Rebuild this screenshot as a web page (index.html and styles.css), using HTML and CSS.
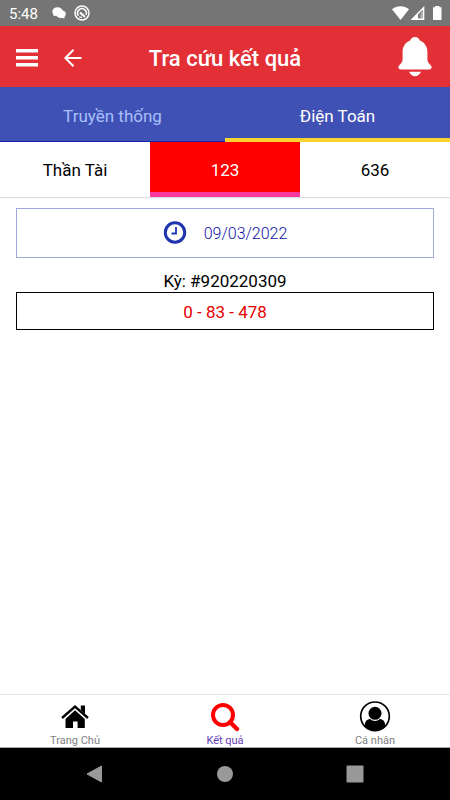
FILE: index.html
```
<!DOCTYPE html>
<html lang="vi">
<head>
    <meta charset="UTF-8">
    <meta name="viewport" content="width=device-width, initial-scale=1.0">
    <title>Tra cứu kết quả</title>
    <link rel="stylesheet" href="styles.css">
</head>
<body>
    <div class="status-bar">
        <span class="time">5:48</span>
        <svg width="14" height="14" viewBox="0 0 14 14" fill="#fff">
            <ellipse cx="5.5" cy="5.5" rx="5.2" ry="4.3"/>
            <ellipse cx="8.8" cy="8" rx="5" ry="4"/>
            <path d="M1 7L1.6 10L5 9.5ZM9 11L12.4 12.8L12.5 10Z"/>
        </svg>
        <svg class="ring-icon" width="16" height="16" viewBox="0 0 16 16" fill="none" stroke="#fff">
            <circle cx="8" cy="8" r="7" stroke-width="1.5"/>
            <path d="M4.5 10.8A4.4 4.4 0 1 1 12 9.8" stroke-width="1.6"/>
            <path d="M6 7.5L11 12" stroke-width="2.2"/>
            <path d="M5 12L8 12.4" stroke-width="1.2"/>
        </svg>
        <svg class="system-icons" width="50" height="16" viewBox="0 0 50 16">
            <path d="M0 4.2C5 .2 12 .2 17 4.2L8.5 15Z" fill="#fff"/>
            <path d="M18.5 15L32.3 1V15Z" fill="#fff"/>
            <path d="M26 9.5L30.8 4.7V13.3H26Z" fill="#757575"/>
            <path d="M28.4 13.3V8.2L30.8 6V13.3Z" fill="#b5b5b5"/>
            <path d="M41 2.2H43V1H47.5V2.2H49.5V15H41Z" fill="#fff"/>
        </svg>
    </div>

    <header class="header">
        <div class="header-left">
            <button class="icon-button" aria-label="Menu">
                <svg width="22" height="18" viewBox="0 0 22 18" fill="#fff">
                    <path d="M0 0H22V3.5H0ZM0 7H22V10.5H0ZM0 14H22V17.5H0Z"/>
                </svg>
            </button>
            <button class="icon-button" aria-label="Quay lại">
                <svg width="18" height="18" viewBox="0 0 18 18" fill="none" stroke="#fff" stroke-width="2">
                    <path d="M17.5 9H1.5M9.5 .8L1.3 9L9.5 17.2"/>
                </svg>
            </button>
        </div>
        <h1>Tra cứu kết quả</h1>
        <button class="icon-button bell" aria-label="Thông báo">
            <svg width="34" height="40" viewBox="0 0 34 40" fill="#fff">
                <path d="M17 0C19.5 0 21 1.5 21.8 3.4C26.6 5.2 29.4 9.5 29.4 15V22C29.4 25 30.8 26.3 32.5 28C34.5 30 33.8 32.4 31 32.4H3C.2 32.4 -.5 30 1.5 28C3.2 26.3 4.6 25 4.6 22V15C4.6 9.5 7.4 5.2 12.2 3.4C13 1.5 14.5 0 17 0Z"/>
                <path d="M11 34.8H23C21.5 37.8 19.5 39.2 17 39.2S12.5 37.8 11 34.8Z"/>
            </svg>
        </button>
    </header>

    <nav class="tabs">
        <a href="#">Truyền thống</a>
        <a href="#" class="active">Điện Toán</a>
    </nav>
    <nav class="sub-tabs">
        <a href="#">Thần Tài</a>
        <a href="#" class="active">123</a>
        <a href="#">636</a>
    </nav>

    <main class="content">
        <button class="date-button">
            <svg width="24" height="24" viewBox="0 0 24 24" fill="none" stroke="#1f35b0">
                <circle cx="12" cy="11.5" r="9.7" stroke-width="3"/>
                <path d="M13 6V12.5H8.5" stroke-width="1.8"/>
            </svg>
            <span>09/03/2022</span>
        </button>
        <p class="draw-id">Kỳ: #920220309</p>
        <div class="result">0 - 83 - 478</div>
    </main>

    <nav class="bottom-nav">
        <a href="#">
            <svg width="32" height="32" viewBox="0 0 32 32">
                <path d="M21.8 5.5H26V14L21.8 10Z"/>
                <path d="M3 18L16 6.5L29 18" fill="none" stroke="#000" stroke-width="2.4"/>
                <path d="M16 10.3L25.8 19V28H18.6V21.5H14V28H6.5V19Z"/>
            </svg>
            <span>Trang Chủ</span>
        </a>
        <a href="#" class="active">
            <svg width="32" height="32" viewBox="0 0 32 32" fill="none" stroke="#f00">
                <circle cx="14" cy="15" r="10" stroke-width="4"/>
                <path d="M21 22L28 29" stroke-width="4.4" stroke-linecap="round"/>
            </svg>
            <span>Kết quả</span>
        </a>
        <a href="#">
            <svg width="32" height="32" viewBox="0 0 32 32">
                <circle cx="16" cy="16.3" r="14.3" fill="none" stroke="#000" stroke-width="1.7"/>
                <circle cx="16" cy="13.3" r="6.5"/>
                <path d="M5.8 26C5.8 21.5 7.5 19.5 11 19C14 21.5 18 21.5 21 19C24.5 19.5 26.2 21.5 26.2 26C20.5 31.8 11.5 31.8 5.8 26Z"/>
            </svg>
            <span>Cá nhân</span>
        </a>
    </nav>

    <div class="system-nav">
        <button class="icon-button" aria-label="Back">
            <svg width="18" height="18" viewBox="0 0 18 18"><path d="M1 9L15.5 1V17Z" fill="#999" stroke="#999" stroke-linejoin="round"/></svg>
        </button>
        <button class="icon-button" aria-label="Home">
            <svg width="18" height="18" viewBox="0 0 18 18"><circle cx="9" cy="9" r="8" fill="#999"/></svg>
        </button>
        <button class="icon-button" aria-label="Recent apps">
            <svg width="18" height="18" viewBox="0 0 18 18"><rect x=".5" y=".5" width="17" height="17" rx="1" fill="#999"/></svg>
        </button>
    </div>
</body>
</html>
```

FILE: styles.css
```
* {
    box-sizing: border-box;
}
body {
    margin: 0;
    min-height: 100vh;
    display: flex;
    flex-direction: column;
    background-color: #fff;
    color: #000;
    font-family: Roboto, sans-serif;
    font-size: 17px;
}
a {
    color: inherit;
    text-decoration: none;
}
svg {
    display: block;
    flex-shrink: 0;
}
.icon-button {
    padding: 0;
    border: none;
    background: none;
    cursor: pointer;
}

/* Status bar */
.status-bar {
    display: flex;
    align-items: center;
    gap: 8px;
    height: 26px;
    padding: 0 8px 0 9px;
    background-color: #757575;
    color: #fff;
}
.time {
    margin-right: 6px;
    padding-top: 2px;
    font-size: 15px;
}
.system-icons {
    margin-left: auto;
}

/* Header */
.header {
    display: grid;
    grid-template-columns: 1fr auto 1fr;
    align-items: center;
    height: 61px;
    padding: 0 16px;
    background-color: #e32f36;
    color: #fff;
}
.header-left {
    display: flex;
    align-items: center;
    gap: 26px;
    padding-top: 3px;
}
.header h1 {
    margin: 0;
    padding-top: 3px;
    font-size: 22px;
    font-weight: 500;
}
.bell {
    justify-self: end;
    margin-right: 2px;
}

/* Tabs */
.tabs, .sub-tabs {
    display: flex;
    height: 55px;
}
.tabs a, .sub-tabs a {
    flex: 1;
    display: flex;
    align-items: center;
    justify-content: center;
}
.tabs {
    background-color: #3f51b5;
    color: #a9c0fa;
}
.tabs a {
    padding-top: 3px;
    border-bottom: 1px solid #1424a8;
}
.tabs .active {
    padding-top: 6px;
    border-bottom: 4px solid #fbd32f;
    color: #fff;
}
.sub-tabs {
    box-shadow: 0 1px 1px #ddd;
}
.sub-tabs .active {
    padding-top: 5px;
    border-bottom: 5px solid #f939a0;
    background-color: #f00;
    color: #fff;
}

/* Result */
.content {
    flex: 1;
    padding: 11px 16px;
    text-align: center;
}
.date-button {
    display: flex;
    align-items: center;
    justify-content: center;
    gap: 17px;
    width: 100%;
    height: 50px;
    border: 1px solid #a3a8dc;
    background-color: #fff;
    color: #1010a8;
    font-family: inherit;
    font-size: 16px;
    font-weight: 300;
    cursor: pointer;
}
.draw-id {
    margin: 12px 0 0;
    line-height: 22px;
}
.result {
    padding: 8px 7px 6px;
    border: 1px solid #000;
    color: #e60000;
    line-height: 22px;
}

/* Bottom navigation */
.bottom-nav {
    display: flex;
    height: 54px;
    border-top: 1px solid #e8e8e8;
    border-bottom: 1px solid #aaa;
}
.bottom-nav a {
    flex: 1;
    display: flex;
    flex-direction: column;
    align-items: center;
    padding-top: 5px;
    color: #808080;
    font-size: 11px;
    line-height: 18px;
}
.bottom-nav .active {
    color: #673ab7;
}
.system-nav {
    display: flex;
    align-items: center;
    justify-content: center;
    gap: 112px;
    height: 52px;
    background-color: #000;
}
```
